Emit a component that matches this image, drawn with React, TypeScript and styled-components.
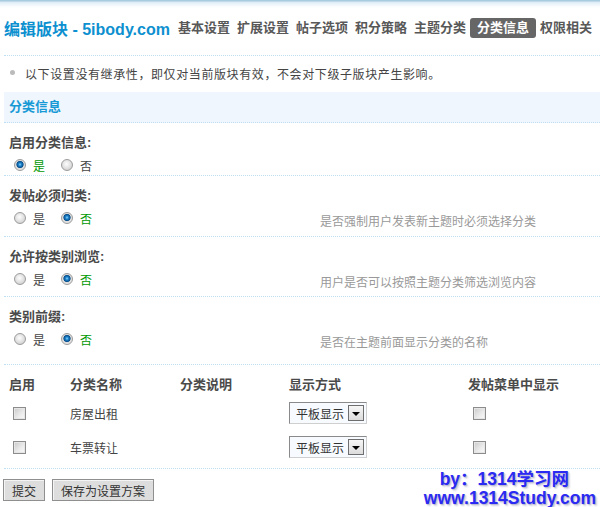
import { Fragment } from 'react';
import styled, { createGlobalStyle } from 'styled-components';

const GlobalStyle = createGlobalStyle`
  html, body {
    margin: 0;
    padding: 0;
    background: #fff;
  }
  body {
    font-family: 'Liberation Sans', 'Noto Sans CJK SC', sans-serif;
    font-size: 12px;
    color: #444;
  }
`;

const FONT = `'Liberation Sans', 'Noto Sans CJK SC', sans-serif`;
const DOTTED = '1px dotted #bfe0f4';

const Page = styled.div`
  position: relative;
  width: 600px;
  height: 507px;
  overflow: hidden;
  background: #fff;
`;

const TopBar = styled.div`
  height: 8px;
  background: linear-gradient(#a8cbdf 0, #a8cbdf 1px, #d9eaf5 2px, #f3f8fc 5px, #fff 8px);
`;

const Content = styled.div`
  margin-left: 4px;
`;

const TitleRow = styled.div`
  display: flex;
  align-items: center;
  height: 20px;
  margin-top: 10px;
  padding-bottom: 17px;
  border-bottom: ${DOTTED};
  white-space: nowrap;
`;

const Title = styled.h1`
  margin: 0 8px 0 0;
  font-family: ${FONT};
  font-size: 16px;
  font-weight: bold;
  color: #0d90cf;
`;

const NavList = styled.div`
  display: flex;
  align-items: center;
  gap: 7px;
`;

const NavItem = styled.span<{ $active?: boolean }>`
  font-size: 13px;
  font-weight: bold;
  line-height: 20px;
  color: ${(p) => (p.$active ? '#fff' : '#585858')};
  background: ${(p) => (p.$active ? '#666' : 'transparent')};
  border-radius: 3px;
  padding: ${(p) => (p.$active ? '0 7px' : '0')};
  margin: ${(p) => (p.$active ? '0 -3px' : '0')};
`;

const Note = styled.div`
  display: flex;
  align-items: center;
  height: 34px;
  padding-bottom: 2px;
  letter-spacing: 0.6px;
  color: #444;
  &::before {
    content: '';
    width: 5px;
    height: 5px;
    border-radius: 50%;
    background: #bbb;
    margin: 0 10px 1px 6px;
  }
`;

const SectionHeader = styled.div`
  height: 30px;
  line-height: 30px;
  padding-left: 5px;
  background: #eff6fd;
  border-bottom: ${DOTTED};
  font-size: 13px;
  font-weight: bold;
  color: #1799d6;
`;

const SettingBlock = styled.div<{ $pb: number }>`
  padding: 10px 0 ${(p) => p.$pb}px 5px;
  border-bottom: ${DOTTED};
`;

const SettingLabel = styled.div`
  height: 20px;
  line-height: 20px;
  font-size: 13px;
  font-weight: bold;
  color: #4a4a4a;
  margin-bottom: 2px;
`;

const OptionsRow = styled.div`
  display: grid;
  grid-template-columns: 311px 1fr;
  align-items: start;
`;

const RadioGroup = styled.div`
  display: flex;
  align-items: center;
  height: 20px;
  padding-left: 5px;
  gap: 16px;
`;

const RadioOption = styled.label`
  display: flex;
  align-items: center;
  gap: 7px;
`;

const Radio = styled.span<{ $checked?: boolean }>`
  display: block;
  width: 12px;
  height: 12px;
  box-sizing: border-box;
  border-radius: 50%;
  border: 1px solid #9c9c9c;
  background: ${(p) =>
    p.$checked
      ? 'radial-gradient(circle at 50% 45%, #8fd6ff 0, #1d84cc 1.5px, #0a4f8c 3.2px, #dcdcdc 4px, #f2f2f2 100%)'
      : 'radial-gradient(circle at 45% 40%, #fdfdfd 0, #e4e4e4 45%, #c4c4c4 100%)'};
`;

const RadioText = styled.span<{ $checked?: boolean }>`
  font-size: 12px;
  color: ${(p) => (p.$checked ? '#009900' : '#444')};
`;

const Desc = styled.div`
  margin-top: 4px;
  line-height: 20px;
  color: #999;
`;

const Table = styled.div`
  display: grid;
  grid-template-columns: 61px 110px 109px 179px 1fr;
  grid-template-rows: 26px 34px 34px;
  align-items: center;
  padding: 5px 0 4px 5px;
  border-bottom: ${DOTTED};
`;

const HeadCell = styled.div`
  font-size: 13px;
  font-weight: bold;
  color: #4a4a4a;
`;

const Cell = styled.div<{ $pl?: number }>`
  display: flex;
  align-items: center;
  padding-left: ${(p) => p.$pl ?? 0}px;
  color: #444;
`;

const Checkbox = styled.span`
  display: block;
  width: 13px;
  height: 13px;
  box-sizing: border-box;
  border: 1px solid #8c8c8c;
  box-shadow: inset 0 0 0 1px #e6e6e6;
  background: linear-gradient(135deg, #c9c9c9 0, #ececec 60%, #fafafa 100%);
`;

const Select = styled.div`
  display: flex;
  align-items: center;
  justify-content: space-between;
  width: 78px;
  height: 22px;
  box-sizing: border-box;
  border: 1px solid;
  border-color: #8a8a8a #cfcfcf #cfcfcf #8a8a8a;
  background: #f7fbff;
  padding: 0 2px 0 6px;
  font-size: 12px;
  color: #333;
`;

const SelectButton = styled.span`
  display: flex;
  align-items: center;
  justify-content: center;
  width: 16px;
  height: 16px;
  box-sizing: border-box;
  border: 1px solid #6e6e6e;
  background: linear-gradient(#f6f6f6, #dcdcdc);
  &::after {
    content: '';
    border-left: 4px solid transparent;
    border-right: 4px solid transparent;
    border-top: 4px solid #000;
    margin-top: 1px;
  }
`;

const Footer = styled.div`
  display: flex;
  gap: 8px;
  padding-top: 10px;
`;

const Button = styled.button`
  height: 22px;
  padding: 0 8px;
  font-family: ${FONT};
  font-size: 12px;
  color: #333;
  background: #dddddd;
  border: 1px solid #8f8f8f;
  box-shadow: inset 1px 1px 0 #f4f4f4;
  margin-left: -1px;
`;

const Watermark = styled.div`
  position: absolute;
  right: 4px;
  bottom: -1px;
  text-align: right;
  font-family: ${FONT};
  font-size: 17.5px;
  font-weight: bold;
  line-height: 19px;
  color: #2a2af2;
  text-shadow: 1px 1px 1px #b8b8d0, 2px 2px 2px #d8d8e6;
  white-space: nowrap;
`;

const WatermarkLine = styled.div<{ $indent?: number }>`
  padding-right: ${(p) => p.$indent ?? 0}px;
`;

const NAV = ['基本设置', '扩展设置', '帖子选项', '积分策略', '主题分类', '分类信息', '权限相关'];

const SETTINGS = [
  { label: '启用分类信息:', yes: true, pb: 0 },
  { label: '发帖必须归类:', yes: false, desc: '是否强制用户发表新主题时必须选择分类', pb: 4 },
  { label: '允许按类别浏览:', yes: false, desc: '用户是否可以按照主题分类筛选浏览内容', pb: 3 },
  { label: '类别前缀:', yes: false, desc: '是否在主题前面显示分类的名称', pb: 11 },
];

const TYPES = ['房屋出租', '车票转让'];

function App() {
  return (
    <Page>
      <GlobalStyle />
      <TopBar />
      <Content>
        <TitleRow>
          <Title>编辑版块 - 5ibody.com</Title>
          <NavList>
            {NAV.map((item) => (
              <NavItem key={item} $active={item === '分类信息'}>
                {item}
              </NavItem>
            ))}
          </NavList>
        </TitleRow>
        <Note>以下设置没有继承性，即仅对当前版块有效，不会对下级子版块产生影响。</Note>
        <SectionHeader>分类信息</SectionHeader>
        {SETTINGS.map((s) => (
          <SettingBlock key={s.label} $pb={s.pb}>
            <SettingLabel>{s.label}</SettingLabel>
            <OptionsRow>
              <RadioGroup>
                <RadioOption>
                  <Radio $checked={s.yes} />
                  <RadioText $checked={s.yes}>是</RadioText>
                </RadioOption>
                <RadioOption>
                  <Radio $checked={!s.yes} />
                  <RadioText $checked={!s.yes}>否</RadioText>
                </RadioOption>
              </RadioGroup>
              {s.desc && <Desc>{s.desc}</Desc>}
            </OptionsRow>
          </SettingBlock>
        ))}
        <Table>
          <HeadCell>启用</HeadCell>
          <HeadCell>分类名称</HeadCell>
          <HeadCell>分类说明</HeadCell>
          <HeadCell>显示方式</HeadCell>
          <HeadCell>发帖菜单中显示</HeadCell>
          {TYPES.map((t) => (
            <Fragment key={t}>
              <Cell $pl={4}>
                <Checkbox />
              </Cell>
              <Cell>{t}</Cell>
              <Cell />
              <Cell>
                <Select>
                  平板显示
                  <SelectButton />
                </Select>
              </Cell>
              <Cell $pl={5}>
                <Checkbox />
              </Cell>
            </Fragment>
          ))}
        </Table>
        <Footer>
          <Button>提交</Button>
          <Button>保存为设置方案</Button>
        </Footer>
      </Content>
      <Watermark>
        <WatermarkLine $indent={27}>by：1314学习网</WatermarkLine>
        <WatermarkLine>www.1314Study.com</WatermarkLine>
      </Watermark>
    </Page>
  );
}

export default App;
